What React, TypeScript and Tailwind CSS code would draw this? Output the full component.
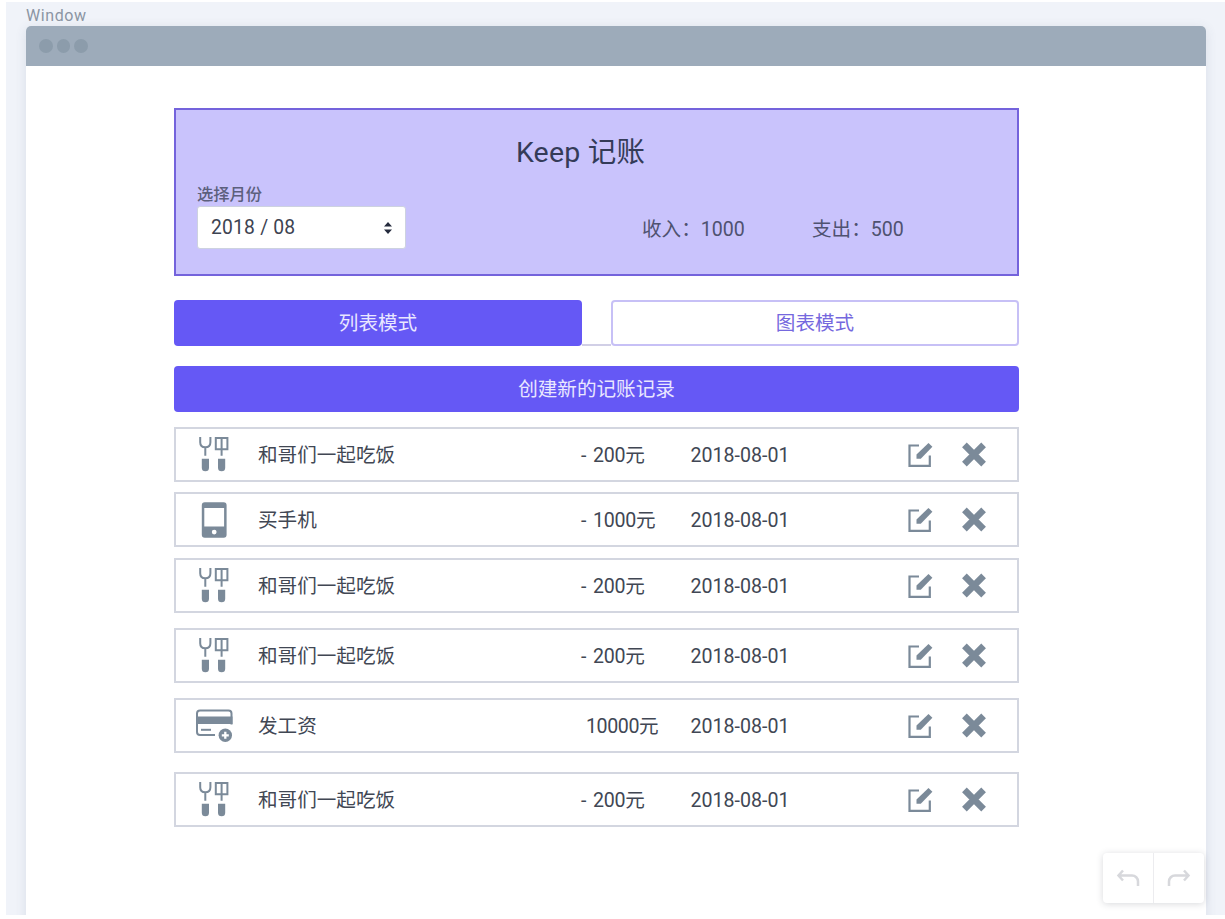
import React from "react";

type Kind = "food" | "phone" | "salary";

interface Entry {
  kind: Kind;
  title: string;
  amount: string;
  date: string;
  gap: string;
}

const entries: Entry[] = [
  { kind: "food", title: "和哥们一起吃饭", amount: "- 200元", date: "2018-08-01", gap: "mt-[15px]" },
  { kind: "phone", title: "买手机", amount: "- 1000元", date: "2018-08-01", gap: "mt-[10px]" },
  { kind: "food", title: "和哥们一起吃饭", amount: "- 200元", date: "2018-08-01", gap: "mt-[11px]" },
  { kind: "food", title: "和哥们一起吃饭", amount: "- 200元", date: "2018-08-01", gap: "mt-[15px]" },
  { kind: "salary", title: "发工资", amount: "10000元", date: "2018-08-01", gap: "mt-[15px]" },
  { kind: "food", title: "和哥们一起吃饭", amount: "- 200元", date: "2018-08-01", gap: "mt-[19px]" },
];

function FoodIcon() {
  return (
    <svg width="38" height="38" viewBox="0 0 38 38" fill="none" stroke="#7b8a99" strokeWidth="2">
      <path d="M5.2 1v5.2c0 3 2 5 5.100 5s5.100-2 5.100-5V1M10.300 11.200v8.500" />
      <path d="M20.800 2h11.600v11.300H20.800zM26.600 2v17.700" />
      <path
        d="M6.800 22.800h7.200v8.900a3.600 3.600 0 0 1-7.200 0zM23 22.800h7.200v8.900a3.600 3.600 0 0 1-7.200 0z"
        fill="#7b8a99"
        stroke="none"
      />
    </svg>
  );
}

function PhoneIcon() {
  return (
    <svg width="38" height="38" viewBox="0 0 38 38">
      <path
        fillRule="evenodd"
        fill="#7b8a99"
        d="M9.800 1.300h18.800a3 3 0 0 1 3 3v29.400a3 3 0 0 1-3 3H9.800a3 3 0 0 1-3-3V4.300a3 3 0 0 1 3-3zM9.300 7v18.500h19.800V7zM19.200 28.700a2.400 2.400 0 1 0 0 4.800 2.400 2.400 0 0 0 0-4.800z"
      />
    </svg>
  );
}

function SalaryIcon() {
  return (
    <svg width="38" height="38" viewBox="0 0 38 38" fill="none" stroke="#7b8a99" strokeWidth="2">
      <path d="M20 28H5a3 3 0 0 1-3-3V6.500a3 3 0 0 1 3-3h28.500a3 3 0 0 1 3 3v11" />
      <path d="M1.500 9.500h36v7.500h-36z" fill="#7b8a99" stroke="none" />
      <path d="M6 22.800h10" />
      <circle cx="30.300" cy="28.300" r="6.700" fill="#7b8a99" stroke="none" />
      <path d="M30.300 24.800v7M26.800 28.300h7" stroke="#ffffff" strokeWidth="2.300" />
    </svg>
  );
}

function KindIcon({ kind }: { kind: Kind }) {
  if (kind === "phone") return <PhoneIcon />;
  if (kind === "salary") return <SalaryIcon />;
  return <FoodIcon />;
}

function EditIcon() {
  return (
    <svg width="26" height="26" viewBox="0 0 26 26" fill="none">
      <path d="M12 3.500H2.500v20.300h20.300V13.500" stroke="#7b8a99" strokeWidth="2.200" />
      <path d="M21.500.9l3.900 3.900L13.800 16.700H9.500v-4.300z" fill="#7b8a99" />
    </svg>
  );
}

function RemoveIcon() {
  return (
    <svg width="26" height="26" viewBox="0 0 26 26" stroke="#7b8a99" strokeWidth="6.600">
      <path d="M3.400 2.900l19.200 19.200M22.600 2.900L3.400 22.100" />
    </svg>
  );
}

function EntryRow({ entry }: { entry: Entry }) {
  const amountStyle = entry.kind === "salary" ? "pl-[5px] tracking-[-0.400px]" : "tracking-[-0.200px]";
  return (
    <li className={`flex h-[55px] items-center border-[2.500px] border-[#d3d6e0] bg-white ${entry.gap}`}>
      <span className="ml-[19px] w-[38px]">
        <KindIcon kind={entry.kind} />
      </span>
      <span className="mt-[2px] ml-[25px] w-[323px]">{entry.title}</span>
      <span className={`mt-[2px] w-[109.500px] [word-spacing:2px] ${amountStyle}`}>{entry.amount}</span>
      <span className="mt-[2px] w-[216.500px]">{entry.date}</span>
      <button className="mt-[1px]" aria-label="编辑">
        <EditIcon />
      </button>
      <button className="ml-[28px]" aria-label="删除">
        <RemoveIcon />
      </button>
    </li>
  );
}

function Summary() {
  return (
    <header className="flex h-[168px] flex-col border-2 border-[#7463dc] bg-[#c9c3fc] px-[21px]">
      <h1 className="mt-[22px] h-[42px] pr-[32px] text-center text-[28.500px] leading-[42px] font-normal tracking-[0.200px] text-[#343b58]">
        Keep 记账
      </h1>
      <div className="mt-[10px] flex">
        <label className="w-[209px] text-[16.300px] leading-[22px] font-medium text-[#5c5f7c]">
          选择月份
          <span className="flex h-[43px] items-center justify-between rounded-[3px] border border-[#cdd2e0] bg-white pr-[13px] pl-[13px] text-[19.300px] font-normal tracking-[0.200px] text-[#3d4351]">
            <span>2018 / 08</span>
            <svg width="8" height="12" viewBox="0 0 8 12" fill="#252b3d">
              <path d="M4 0l4 4.500H0zM4 12L0 7.500h8z" />
            </svg>
          </span>
        </label>
        <p className="mt-[32px] ml-[236px] w-[170px] leading-[28px] text-[#4f5270]">收入：1000</p>
        <p className="mt-[32px] leading-[28px] text-[#4f5270]">支出：500</p>
      </div>
    </header>
  );
}

export default function App() {
  return (
    <div className="h-[919px] w-[1225px] overflow-hidden bg-white pt-[2px] pl-[6px] font-['Roboto','Noto_Sans_CJK_SC',sans-serif] text-[19.600px]">
      <div className="relative h-[913px] overflow-hidden bg-[#f0f3f9] pl-5">
        <div className="h-6 text-[16px] leading-[27px] tracking-[0.600px] text-[#8b95a3]">Window</div>
        <div className="h-[900px] w-[1180px] rounded-t-[5px] bg-white shadow-[0_2px_12px_rgba(60,70,110,0.12)]">
          <div className="flex h-[39.500px] items-center gap-1 rounded-t-[5px] bg-[#9dabba] pl-[13px]">
            <span className="size-[13.500px] rounded-full bg-[#8c9cab]" />
            <span className="size-[13.500px] rounded-full bg-[#8c9cab]" />
            <span className="size-[13.500px] rounded-full bg-[#8c9cab]" />
          </div>
          <main className="mt-[42.500px] ml-[148px] w-[845px] text-[#414754]">
            <Summary />
            <nav className="mt-[24px] flex h-[46px]">
              <button className="w-[408px] rounded-[4px] bg-[#6558f5] pt-[2px] text-[#e9e7ff]">列表模式</button>
              <span className="w-[29px] border-b-2 border-[#d1cfe6]" />
              <button className="w-[408px] rounded-[4px] border-2 border-[#c7c0f6] pt-[2px] text-[#7568de]">图表模式</button>
            </nav>
            <button className="mt-[20px] block h-[46px] w-full rounded-[4px] bg-[#6558f5] pt-[1px] text-[#e9e7ff]">
              创建新的记账记录
            </button>
            <ul>
              {entries.map((entry, i) => (
                <EntryRow key={i} entry={entry} />
              ))}
            </ul>
          </main>
        </div>
        <div className="absolute top-[851px] left-[1097px] flex h-[50px] w-[101px] rounded-[4px] bg-white shadow-[0_1px_7px_rgba(40,45,60,0.18)]">
          <button className="flex w-[51px] items-center justify-center border-r border-[#ececef]" aria-label="撤销">
            <svg width="24" height="18" viewBox="0 0 24 18" fill="none" stroke="#d7d8dc" strokeWidth="2.500">
              <path d="M7 1.500L2.500 6.500l4.500 5M2.500 6.500H16a6 6 0 0 1 6 6V17" />
            </svg>
          </button>
          <button className="flex w-[50px] items-center justify-center" aria-label="重做">
            <svg width="24" height="18" viewBox="0 0 24 18" fill="none" stroke="#d7d8dc" strokeWidth="2.500">
              <path d="M17 1.500l4.500 5-4.500 5M21.500 6.500H8a6 6 0 0 0-6 6V17" />
            </svg>
          </button>
        </div>
      </div>
    </div>
  );
}
